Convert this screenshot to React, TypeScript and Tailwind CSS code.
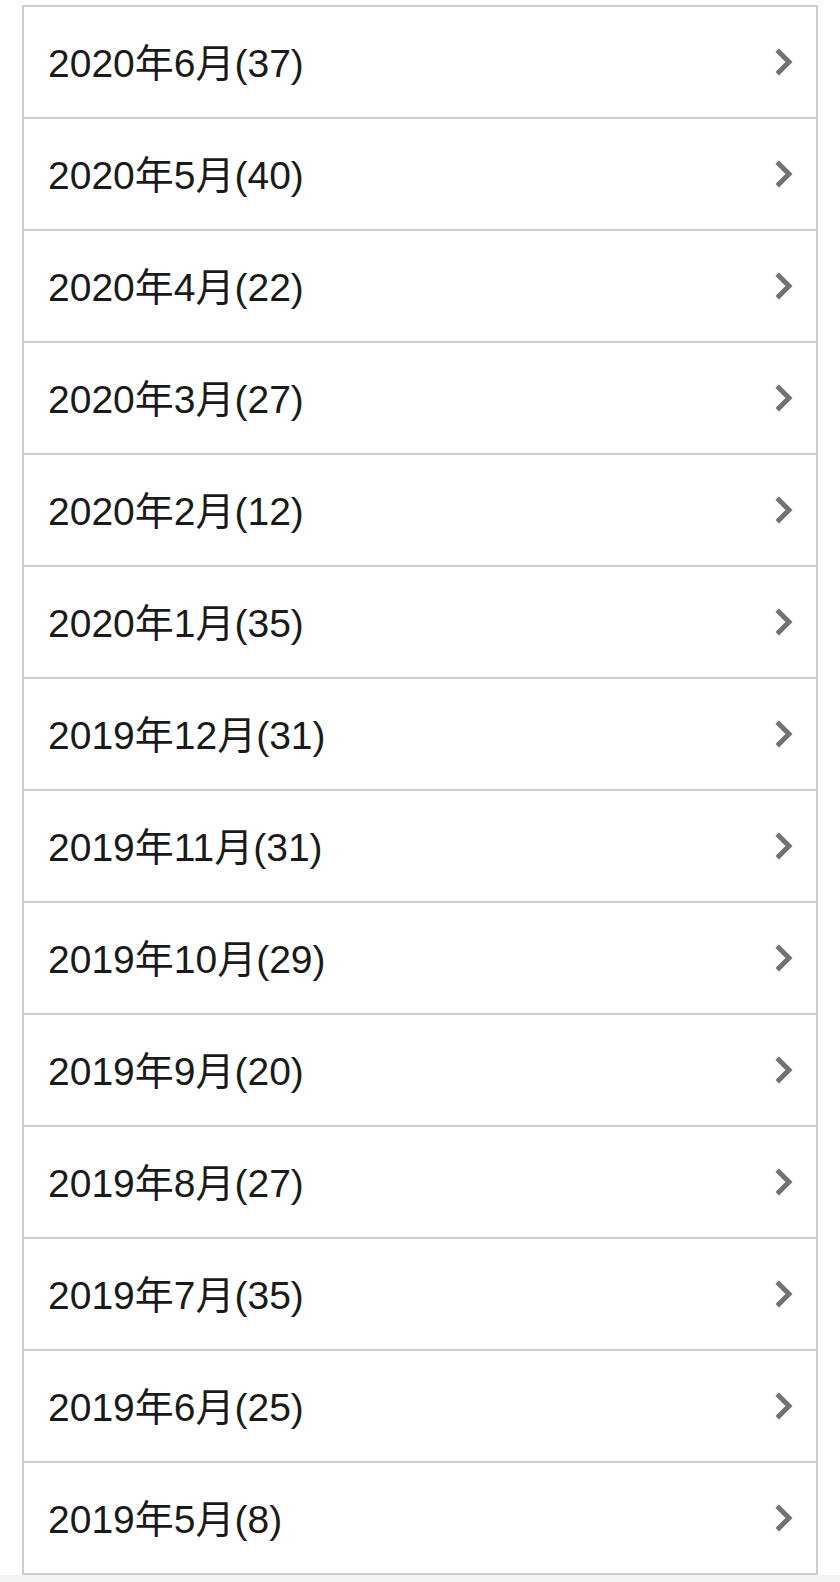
const months = [
  { label: '2020年6月(37)' },
  { label: '2020年5月(40)' },
  { label: '2020年4月(22)' },
  { label: '2020年3月(27)' },
  { label: '2020年2月(12)' },
  { label: '2020年1月(35)' },
  { label: '2019年12月(31)' },
  { label: '2019年11月(31)' },
  { label: '2019年10月(29)' },
  { label: '2019年9月(20)' },
  { label: '2019年8月(27)' },
  { label: '2019年7月(35)' },
  { label: '2019年6月(25)' },
  { label: '2019年5月(8)' },
];

export default function App() {
  return (
    <div className="min-h-[1582px] w-full bg-[#f5f5f0]">
      {/* アーカイブ一覧 */}
      <div className="bg-white px-[22px] pt-[5px]">
        <ul className="border-x-2 border-t-2 border-[#cccccc]">
          {months.map((m) => (
            <ArchiveRow key={m.label} label={m.label} />
          ))}
        </ul>
      </div>
    </div>
  );
}

function ArchiveRow({ label }: { label: string }) {
  return (
    <li className="flex h-[112px] items-center justify-between border-b-2 border-[#cccccc] pl-[24px] pr-[23px]">
      <span
        className="pt-[2px] text-[39px] leading-none text-[#1a1a1a]"
        style={{ fontFamily: '"Liberation Sans", "Noto Sans CJK JP", sans-serif' }}
      >
        {label}
      </span>
      <svg width="18" height="28" viewBox="0 0 18 28" fill="none" className="shrink-0">
        <path d="M4 4 L14 14 L4 24" stroke="#727272" strokeWidth="5" strokeLinecap="square" />
      </svg>
    </li>
  );
}
